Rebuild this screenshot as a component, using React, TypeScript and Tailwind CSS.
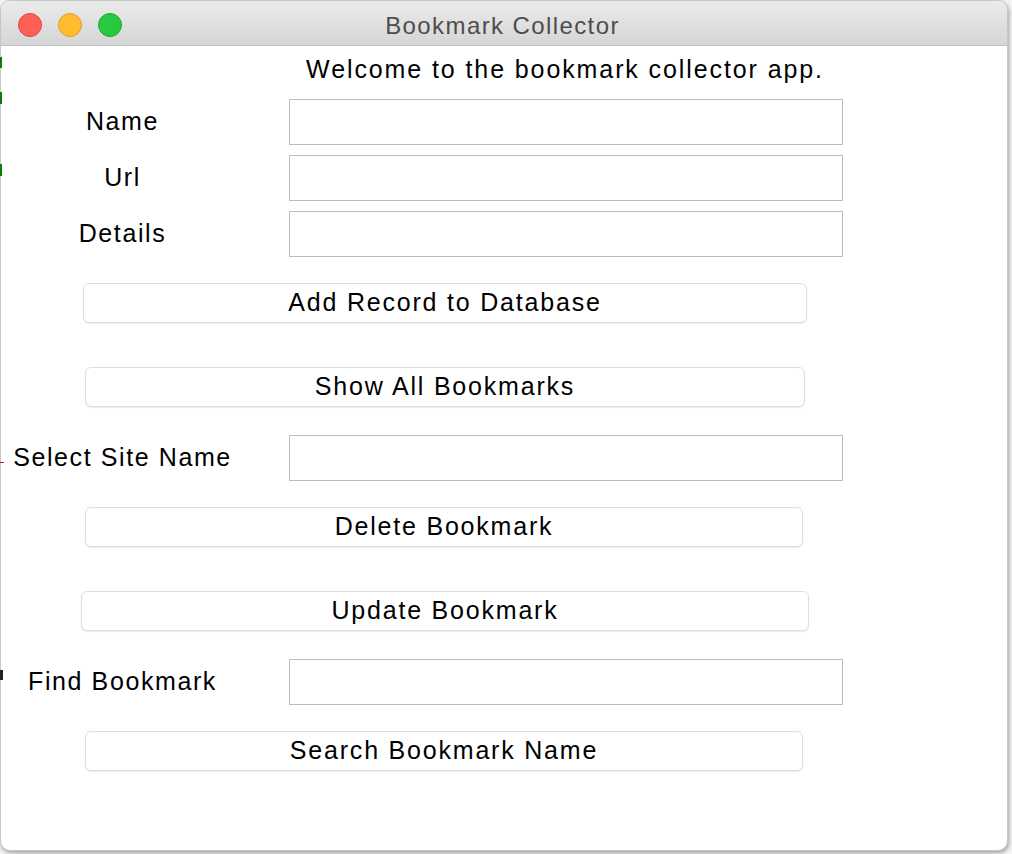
import React from 'react';

const font = { fontFamily: '"Liberation Sans", Arial, sans-serif' };

function Field({ label }: { label: string }) {
  return (
    <div className="flex items-center h-[46px]">
      <div className="w-[243px] text-center text-[25px] tracking-[1.6px] text-black">{label}</div>
      <div className="ml-[45px] w-[554px] h-[46px] border border-[#bdbdbd] bg-white" />
    </div>
  );
}

function Btn({ text, left, width }: { text: string; left: number; width: number }) {
  return (
    <div className="flex">
      <div style={{ marginLeft: left, width }}>
        <button className="w-full h-[40px] rounded-[6px] border border-[#dedede] bg-white shadow-[0_1px_1px_rgba(0,0,0,0.08)] text-[25px] tracking-[1.8px] text-black flex items-center justify-center">
          {text}
        </button>
      </div>
    </div>
  );
}

export default function App() {
  return (
    <div className="w-[1012px] h-[854px] bg-[#f4f4f4] relative overflow-hidden" style={font}>
      <div className="w-[1008px] h-[851px] rounded-[10px] border border-[#c6c6c6] bg-white shadow-[1px_2px_4px_rgba(0,0,0,0.35)] overflow-hidden flex flex-col">
        {/* title bar */}
        <div className="h-[45px] shrink-0 relative bg-gradient-to-b from-[#ebebeb] to-[#d5d5d5] border-b border-[#c3c3c3] flex items-center justify-center pt-[5px]">
          <div className="absolute left-[17px] top-[12px] flex gap-[16px]">
            <span className="w-[24px] h-[24px] rounded-full bg-[#fe5f57] border border-[#e2463f]" />
            <span className="w-[24px] h-[24px] rounded-full bg-[#febc2e] border border-[#dfa123]" />
            <span className="w-[24px] h-[24px] rounded-full bg-[#28c840] border border-[#1dad2b]" />
          </div>
          <span className="text-[24px] tracking-[1.4px] text-[#4d4d4d] ml-[-3px]">Bookmark Collector</span>
        </div>

        {/* content */}
        <div className="flex flex-col pt-[8px]">
          <div className="flex">
            <div className="ml-[287px] w-[554px] h-[30px] text-center text-[25px] leading-[30px] tracking-[1.9px] text-black">
              Welcome to the bookmark collector app.
            </div>
          </div>
          <div className="mt-[15px] flex flex-col gap-[10px]">
            <Field label="Name" />
            <Field label="Url" />
            <Field label="Details" />
          </div>
          <div className="mt-[26px]">
            <Btn text="Add Record to Database" left={82} width={724} />
          </div>
          <div className="mt-[44px]">
            <Btn text="Show All Bookmarks" left={84} width={720} />
          </div>
          <div className="mt-[28px]">
            <Field label="Select Site Name" />
          </div>
          <div className="mt-[26px]">
            <Btn text="Delete Bookmark" left={84} width={718} />
          </div>
          <div className="mt-[44px]">
            <Btn text="Update Bookmark" left={80} width={728} />
          </div>
          <div className="mt-[28px]">
            <Field label="Find Bookmark" />
          </div>
          <div className="mt-[26px]">
            <Btn text="Search Bookmark Name" left={84} width={718} />
          </div>
        </div>
      </div>

      {/* bits of the window behind */}
      <span className="absolute left-0 top-[57px] w-[2px] h-[11px] bg-[#0b7a0b]" />
      <span className="absolute left-0 top-[92px] w-[2px] h-[12px] bg-[#0b7a0b]" />
      <span className="absolute left-0 top-[164px] w-[2px] h-[12px] bg-[#0b7a0b]" />
      <span className="absolute left-0 top-[462px] w-[4px] h-[1px] bg-[#b22222]" />
      <span className="absolute left-0 top-[670px] w-[3px] h-[10px] bg-[#222]" />
    </div>
  );
}
